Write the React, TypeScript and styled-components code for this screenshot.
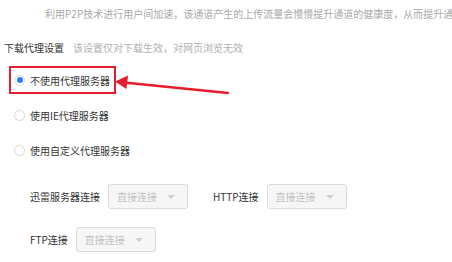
import styled, { createGlobalStyle } from "styled-components";

const GlobalStyle = createGlobalStyle`
  body {
    margin: 0;
    background: #fff;
    font-family: "Noto Sans CJK SC", "Noto Sans", sans-serif;
  }
`;

const Page = styled.div`
  position: relative;
  width: 452px;
  height: 262px;
  overflow: hidden;
  padding-left: 4px;
  box-sizing: border-box;
  font-size: 10px;
  color: #333;
`;

const Intro = styled.div`
  margin-top: 6px;
  padding-left: 41px;
  line-height: 16px;
  white-space: nowrap;
  overflow: hidden;
  color: #a8a8a8;
`;

const Header = styled.div`
  margin-top: 18px;
  line-height: 16px;
  display: flex;
  gap: 9px;
`;

const Hint = styled.span`
  color: #b0b0b0;
`;

const RadioList = styled.div`
  margin-top: 10px;
  display: flex;
  flex-direction: column;
  gap: 7px;
  padding-left: 5px;
`;

const Option = styled.label<{ $marked?: boolean }>`
  display: flex;
  align-items: center;
  gap: 5px;
  height: 28px;
  width: fit-content;
  padding: 0 4px 0 3px;
  box-sizing: border-box;
  border: 2px solid ${(p) => (p.$marked ? "#e61e2b" : "transparent")};
`;

const Circle = styled.span<{ $checked?: boolean }>`
  width: 11px;
  height: 11px;
  border-radius: 50%;
  border: 1px solid #d6d6d6;
  box-sizing: border-box;
  display: flex;
  align-items: center;
  justify-content: center;
  background: #fff;

  &::after {
    content: "";
    width: 6px;
    height: 6px;
    border-radius: 50%;
    background: ${(p) => (p.$checked ? "#2f7cf6" : "transparent")};
  }
`;

const Fields = styled.div`
  margin-top: 20px;
  padding-left: 26px;
  display: flex;
  flex-direction: column;
  gap: 18px;
`;

const FieldRow = styled.div`
  display: flex;
  align-items: center;
  gap: 25px;
`;

const Field = styled.div`
  display: flex;
  align-items: center;
  gap: 8px;
`;

const Select = styled.div`
  width: 80px;
  height: 25px;
  box-sizing: border-box;
  border: 1px solid #dcdcdc;
  border-radius: 3px;
  background: #f6f6f6;
  display: flex;
  align-items: center;
  justify-content: space-between;
  padding: 0 12px 0 8px;
  color: #c4c4c4;
`;

const Caret = styled.span`
  width: 0;
  height: 0;
  border-left: 4px solid transparent;
  border-right: 4px solid transparent;
  border-top: 4px solid #d0d0d0;
`;

const Arrow = styled.svg`
  position: absolute;
  left: 110px;
  top: 70px;
`;

const options = ["不使用代理服务器", "使用IE代理服务器", "使用自定义代理服务器"];

function Dropdown() {
  return (
    <Select>
      直接连接
      <Caret />
    </Select>
  );
}

export default function App() {
  return (
    <>
      <GlobalStyle />
      <Page>
        <Intro>利用P2P技术进行用户间加速，该通道产生的上传流量会慢慢提升通道的健康度，从而提升通道的下载速度</Intro>
        <Header>
          下载代理设置<Hint>该设置仅对下载生效，对网页浏览无效</Hint>
        </Header>
        <RadioList>
          {options.map((o, i) => (
            <Option key={o} $marked={i === 0}>
              <Circle $checked={i === 0} />
              {o}
            </Option>
          ))}
        </RadioList>
        <Fields>
          <FieldRow>
            <Field>
              迅雷服务器连接
              <Dropdown />
            </Field>
            <Field>
              HTTP连接
              <Dropdown />
            </Field>
          </FieldRow>
          <FieldRow>
            <Field>
              FTP连接
              <Dropdown />
            </Field>
          </FieldRow>
        </Fields>
        <Arrow width="130" height="30" viewBox="0 0 130 30">
          <line x1="14" y1="12.5" x2="118" y2="23" stroke="#e61e2b" strokeWidth="2.4" strokeLinecap="round" />
          <polygon points="5,11.5 18,5.5 16.5,19" fill="#e61e2b" />
        </Arrow>
      </Page>
    </>
  );
}
